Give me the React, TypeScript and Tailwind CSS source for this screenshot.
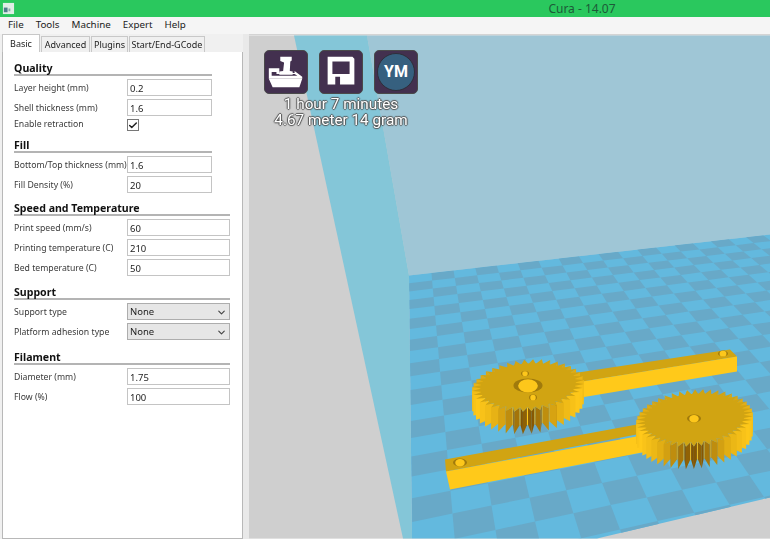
import React from "react";
import { Check, ChevronDown } from "lucide-react";

const uiFont = "font-['Noto_Sans','Liberation_Sans',sans-serif]";

const Field = ({ label, value }: { label: string; value: string }) => (
  <div className="flex h-[17px] items-center">
    <span className="w-[113px] shrink-0 whitespace-nowrap pt-[2px] text-[8.7px] text-[#3a3a3a]">{label}</span>
    <input
      readOnly
      value={value}
      className="h-full min-w-0 flex-1 border border-[#c4c4c4] bg-white px-[2px] pt-[1px] text-[9.5px] text-[#222] outline-none"
    />
  </div>
);

const Dropdown = ({ label, value }: { label: string; value: string }) => (
  <div className="flex h-[17px] items-center">
    <span className="w-[113px] shrink-0 whitespace-nowrap pt-[2px] text-[8.7px] text-[#3a3a3a]">{label}</span>
    <div className="flex h-full flex-1 items-center justify-between border border-[#adadad] bg-[#e6e6e6] px-[2px] pt-[1px] text-[9.5px] text-[#222]">
      {value}
      <ChevronDown size={11} strokeWidth={2.5} className="text-[#444]" />
    </div>
  </div>
);

const Section = ({ title, className, children }: { title: string; className: string; children: React.ReactNode }) => (
  <section className={`flex flex-col gap-[3px] ${className}`}>
    <h2 className="flex h-[16px] items-center border-b-2 border-[#b4b4b4] pt-[3px] text-[10.6px] font-bold text-[#111]">{title}</h2>
    {children}
  </section>
);

const tabs = [
  { label: "Advanced", width: "w-[49px]" },
  { label: "Plugins", width: "w-[37px]" },
  { label: "Start/End-GCode", width: "w-[76px]" },
];

const SettingsPanel = () => (
  <aside className="flex w-[243px] shrink-0 flex-col pl-[2px]">
    <div className="flex h-[18px] items-end gap-px text-[9px] text-[#222]">
      <div className="flex h-[18px] w-[38px] items-center justify-center border border-b-0 border-[#c8c8c8] bg-white">Basic</div>
      {tabs.map((t) => (
        <div key={t.label} className={`flex h-[16px] items-center justify-center border border-b-0 border-[#c8c8c8] bg-[#f0f0f0] ${t.width}`}>
          {t.label}
        </div>
      ))}
    </div>
    <div className="flex flex-1 flex-col border border-t-0 border-[#b8b8b8] bg-white pl-[11px] pt-[8px]">
      <Section title="Quality" className="w-[198px]">
        <Field label="Layer height (mm)" value="0.2" />
        <Field label="Shell thickness (mm)" value="1.6" />
        <div className="flex h-[12px] items-center">
          <span className="w-[113px] shrink-0 whitespace-nowrap text-[8.7px] text-[#3a3a3a]">Enable retraction</span>
          <span className="flex h-[12px] w-[12px] items-center justify-center border border-[#777] bg-white">
            <Check size={11} strokeWidth={3.5} className="text-[#222]" />
          </span>
        </div>
      </Section>
      <Section title="Fill" className="mt-[6px] w-[198px]">
        <Field label="Bottom/Top thickness (mm)" value="1.6" />
        <Field label="Fill Density (%)" value="20" />
      </Section>
      <Section title="Speed and Temperature" className="mt-[7px] w-[216px]">
        <Field label="Print speed (mm/s)" value="60" />
        <Field label="Printing temperature (C)" value="210" />
        <Field label="Bed temperature (C)" value="50" />
      </Section>
      <Section title="Support" className="mt-[8px] w-[216px]">
        <Dropdown label="Support type" value="None" />
        <Dropdown label="Platform adhesion type" value="None" />
      </Section>
      <Section title="Filament" className="mt-[9px] w-[216px]">
        <Field label="Diameter (mm)" value="1.75" />
        <Field label="Flow (%)" value="100" />
      </Section>
    </div>
  </aside>
);

type Pt = [number, number];

// floor perspective, numbers read off the reference
const V1: Pt = [405, -30];
const V2: Pt = [3100, -30];

const intersect = (a: Pt, b: Pt, c: Pt, d: Pt): Pt => {
  const a1 = b[1] - a[1];
  const b1 = a[0] - b[0];
  const c1 = a1 * a[0] + b1 * a[1];
  const a2 = d[1] - c[1];
  const b2 = c[0] - d[0];
  const c2 = a2 * c[0] + b2 * c[1];
  const det = a1 * b2 - a2 * b1;
  return [(c1 * b2 - c2 * b1) / det, (a1 * c2 - a2 * c1) / det];
};

const floorPoint = (i: number, j: number): Pt => {
  const y = 1 / (1 / 306 - j * 0.81e-4) - 30;
  const left: Pt = [405 + (y + 30) * 0.0122, y];
  const bx = 3100 - 1 / (1 / 2691 + i * 3.13e-6);
  const back: Pt = [bx, 276 - (bx - 409) * (306 / 2691)];
  return intersect(V1, back, V2, left);
};

const poly = (pts: Pt[]) => pts.map((p) => `${p[0].toFixed(1)},${p[1].toFixed(1)}`).join(" ");

const Checker = () => {
  const cells: React.ReactNode[] = [];
  for (let j = 0; j < 26; j++) {
    for (let i = 0; i < 22; i++) {
      if ((i + j) % 2 === 0) continue;
      cells.push(
        <polygon
          key={`${i}-${j}`}
          fill="#68a9c8"
          points={poly([floorPoint(i, j), floorPoint(i + 1, j), floorPoint(i + 1, j + 1), floorPoint(i, j + 1)])}
        />
      );
    }
  }
  return <g clipPath="url(#floor)">{cells}</g>;
};

const mix = (t: number) => {
  const c = [255 + (120 - 255) * t, 201 + (75 - 201) * t, 26 + (0 - 26) * t].map(Math.round);
  return `rgb(${c[0]},${c[1]},${c[2]})`;
};

const Gear = ({ cx, cy, rx, ry, teeth, h }: { cx: number; cy: number; rx: number; ry: number; teeth: number; h: number }) => {
  const pts: { x: number; y: number; a: number; tip: boolean }[] = [];
  const place = (a: number, r: number) => {
    const x = Math.cos(a) * r;
    pts.push({ x: cx + x * rx, y: cy + Math.sin(a) * r * ry - x * rx * 0.07, a, tip: r === 1 });
  };
  for (let n = 0; n < teeth; n++) {
    const s = (n / teeth) * Math.PI * 2;
    const w = (Math.PI * 2) / teeth;
    place(s, 0.85);
    place(s + w * 0.15, 0.85);
    place(s + w * 0.58, 1);
  }
  // bottom edge spikes a little deeper than the top face, as in the render
  const under = (p: { y: number; a: number; tip: boolean }) =>
    p.y + h + (p.tip ? 2.5 : -2.5) * Math.max(0, Math.sin(p.a));
  const sides = pts
    .map((p, k) => {
      const q = pts[(k + 1) % pts.length];
      // direction of the wall in the gear's own plane, not the squashed view
      const dx = (q.x - p.x) / rx;
      const dy = (q.y - p.y + (q.x - p.x) * 0.07) / ry;
      const len = Math.hypot(dx, dy) || 1;
      return { p, q, nx: dy / len, ny: -dx / len };
    })
    .filter((e) => e.ny > -0.2)
    .sort((a, b) => a.p.y + a.q.y - b.p.y - b.q.y);
  return (
    <g>
      {sides.map((e, k) => (
        <polygon
          key={k}
          fill={mix(0.3 * Math.abs(e.nx) + 0.7 * Math.pow(Math.abs(e.nx), 2) * Math.pow(Math.max(0, Math.sin(e.p.a)), 6))}
          points={poly([[e.p.x, e.p.y], [e.q.x, e.q.y], [e.q.x, under(e.q)], [e.p.x, under(e.p)]])}
        />
      ))}
      <polygon fill="#d1a412" points={poly(pts.map((p) => [p.x, p.y] as Pt))} />
    </g>
  );
};

const Hole = ({ cx, cy, rx, ry }: { cx: number; cy: number; rx: number; ry: number }) => (
  <g>
    <ellipse cx={cx} cy={cy} rx={rx} ry={ry} fill="#a07a0c" />
    <ellipse cx={cx} cy={cy + ry * 0.05} rx={rx * 0.68} ry={ry * 0.95} fill="#fdc71b" />
  </g>
);

const Scene = () => (
  <svg viewBox="249 36 521 503" className="absolute inset-0 h-full w-full blur-[0.4px]">
    <defs>
      <clipPath id="floor">
        <polygon points="409,276 770,235 770,498 597,539 412,539" />
      </clipPath>
    </defs>
    <rect x="249" y="36" width="521" height="503" fill="#cfcfcf" />
    <polygon points="367,36 770,36 770,235 409,276" fill="#9fc6d6" />
    <polygon points="294,36 367,36 409,276 412,539 403,539" fill="#84c6d8" />
    <polygon points="409,276 770,235 770,498 597,539 412,539" fill="#63b9de" />
    <Checker />
    <polygon points="565,375 730,350 737,357 570,384" fill="#d1a412" />
    <polygon points="570,384 737,357 737,372 575,399" fill="#ffc91a" />
    <polygon points="445,460 637,425 647,433 446,472" fill="#d1a412" />
    <polygon points="446,472 647,435 647,452 450,490" fill="#ffc91a" />
    <Hole cx={723} cy={354} rx={5} ry={3} />
    <Hole cx={460} cy={463} rx={7} ry={4} />
    <Gear cx={528} cy={386} rx={56} ry={26} teeth={40} h={20} />
    <Gear cx={694.500} cy={418.500} rx={58.500} ry={28.500} teeth={46} h={20} />
    <Hole cx={528} cy={386} rx={14.500} ry={7} />
    <Hole cx={525} cy={374} rx={4} ry={2.500} />
    <Hole cx={533} cy={398} rx={4} ry={3} />
    <Hole cx={694} cy={419} rx={7} ry={4} />
  </svg>
);

const ToolButton = ({ children }: { children: React.ReactNode }) => (
  <div className="h-[44px] w-[44px] overflow-hidden rounded-[5px] border border-[#4a4a4a] bg-[#43304f]">{children}</div>
);

const Viewport = () => (
  <main className="relative flex-1 border-t border-[#d4d4d4]">
    <Scene />
    <div className="absolute left-[16px] top-[15px] flex w-[152px] flex-col items-center blur-[0.3px]">
      <div className="flex gap-[11px]">
        <ToolButton>
          <svg viewBox="0 0 44 44" className="h-full w-full">
            <path fill="#fff" d="M16 6h12v4l-1.500 1-.5 10 3 .5V25H15v-3.500l4-.5 1-9-4-1.500z" />
            <path fill="#fff" fillRule="evenodd" d="M4 18h11v5h16v-2l8 6v2H4zM7 22v4h27l-3-2H12v-2z" />
            <path fill="#fff" d="M4 29h35l-3 9H8z" />
          </svg>
        </ToolButton>
        <ToolButton>
          <svg viewBox="0 0 44 44" className="h-full w-full">
            <path
              fill="#fff"
              fillRule="evenodd"
              d="M8 6h26l2 2v27H8zM13 11v13h18V11zM16 27v8h5v-8z"
            />
          </svg>
        </ToolButton>
        <ToolButton>
          <div className="flex h-full w-full items-center justify-center">
            <span className="flex h-[38px] w-[38px] items-center justify-center rounded-full border border-[#2f2f3a] bg-[#36607f] font-['Roboto',sans-serif] text-[16px] font-bold text-white">
              YM
            </span>
          </div>
        </ToolButton>
      </div>
      <div className="mt-[2px] whitespace-nowrap text-center font-['Roboto',sans-serif] text-[15.300px] leading-[16px] text-white [text-shadow:1px_0_1px_#555,-1px_0_1px_#555,0_1px_1px_#555,0_-1px_1px_#555]">
        <p>1 hour 7 minutes</p>
        <p>4.67 meter 14 gram</p>
      </div>
    </div>
  </main>
);

const menus = ["File", "Tools", "Machine", "Expert", "Help"];

export default function App() {
  return (
    <div className={`flex h-[539px] w-[770px] flex-col overflow-hidden bg-[#f0f0f0] ${uiFont}`}>
      <header className="relative flex h-[17px] shrink-0 items-center justify-center bg-[#2ac85e] pl-[394px] text-[12px] text-[#1d5a38]">
        <svg viewBox="0 0 14 14" className="absolute left-[2px] top-[2px] h-[13px] w-[13px]">
          <rect x="1" y="1" width="12" height="12" fill="#dfeee6" />
          <rect x="2" y="6" width="4" height="5" fill="#4d7d8a" />
          <rect x="7" y="7" width="2" height="3" fill="#8aa" />
        </svg>
        Cura - 14.07
      </header>
      <nav className="flex h-[17px] shrink-0 items-center gap-[12px] bg-[#f5f5f5] pl-[8px] text-[9.8px] text-[#222]">
        {menus.map((m) => (
          <span key={m}>{m}</span>
        ))}
      </nav>
      <div className="flex min-h-0 flex-1 blur-[0.3px]">
        <SettingsPanel />
        <div className="w-[6px] shrink-0 bg-[#e9e9e9]" />
        <Viewport />
      </div>
    </div>
  );
}
